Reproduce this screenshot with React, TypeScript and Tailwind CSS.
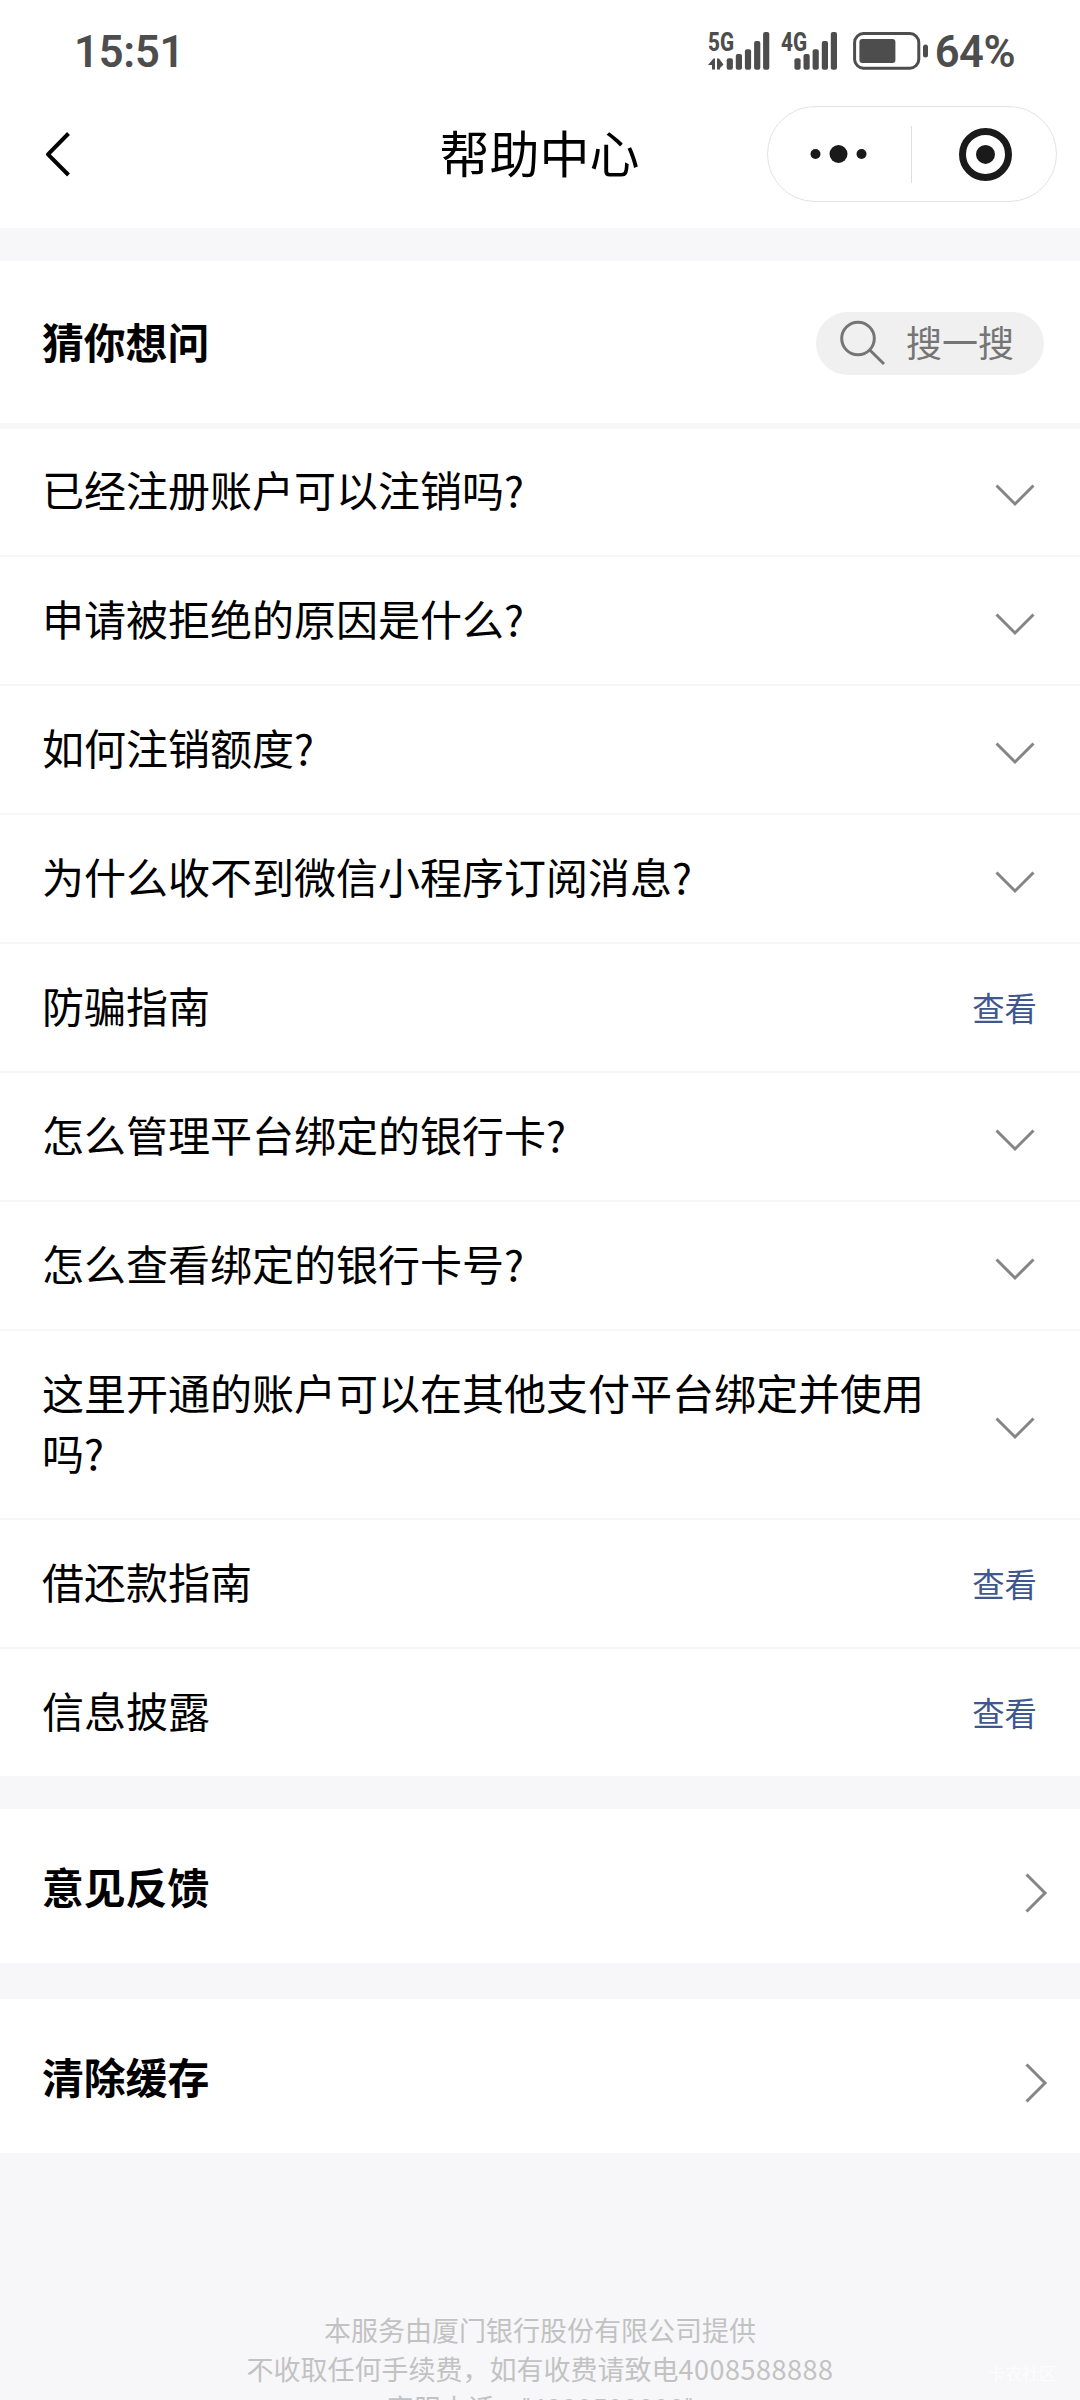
import React from "react";

type Question = {
    title: string;
    action: "expand" | "view";
};

const questions: Question[] = [
    { title: "已经注册账户可以注销吗?", action: "expand" },
    { title: "申请被拒绝的原因是什么?", action: "expand" },
    { title: "如何注销额度?", action: "expand" },
    { title: "为什么收不到微信小程序订阅消息?", action: "expand" },
    { title: "防骗指南", action: "view" },
    { title: "怎么管理平台绑定的银行卡?", action: "expand" },
    { title: "怎么查看绑定的银行卡号?", action: "expand" },
    { title: "这里开通的账户可以在其他支付平台绑定并使用吗?", action: "expand" },
    { title: "借还款指南", action: "view" },
    { title: "信息披露", action: "view" },
];

const links = ["意见反馈", "清除缓存"];

// left edge offset and top of each signal bar, shortest first
const bars = [
    [0, 26.3],
    [9.1, 22],
    [18.2, 17.3],
    [27.4, 9],
    [36.4, 0],
];

function Signal({ label, barsX, arrows }: { label: string; barsX: number; arrows?: boolean }) {
    return (
        <svg width="62" height="38" viewBox="0 0 62 38" fill="#4d4d4d" className="overflow-visible">
            <text
                x="0"
                y="18.6"
                fontSize="26"
                fontWeight="800"
                textLength="26"
                lengthAdjust="spacingAndGlyphs"
                className="font-['Roboto',sans-serif]"
            >
                {label}
            </text>
            {arrows && <path d="M0 33 L5.5 26.5 H7 V37.5 H4 V33 Z M9 26.5 H11 L15.5 32.5 L12 36 V37.5 H9 Z" />}
            {bars.map(([x, y]) => (
                <rect key={x} x={barsX + x} y={y} width="6.2" height={37.7 - y} rx="2" />
            ))}
        </svg>
    );
}

function StatusBar() {
    return (
        <div className="flex h-[102px] items-center justify-between pl-[74px] pr-[65px] font-['Roboto','Noto_Sans_CJK_SC',sans-serif] text-[43.5px] font-semibold leading-none text-[#4d4d4d]">
            <span className="mt-[3px] tracking-[-0.2px]">15:51</span>
            <div className="flex items-center">
                <Signal label="5G" barsX={18.7} arrows />
                <span className="w-[11px]" />
                <Signal label="4G" barsX={13.4} />
                <span className="w-[10px]" />
                <svg width="76" height="38" viewBox="0 0 76 38" fill="#4d4d4d">
                    <rect x="1.6" y="1.6" width="64.2" height="34.6" rx="9" fill="none" stroke="#4d4d4d" strokeWidth="3" />
                    <rect x="6.4" y="6.9" width="36" height="24" rx="3" />
                    <rect x="70" y="12.4" width="5" height="13" rx="2.5" />
                </svg>
                <span className="ml-[6px] mt-[3px] tracking-[-0.5px]">64%</span>
            </div>
        </div>
    );
}

function NavBar() {
    return (
        <div className="grid h-[126px] grid-cols-[1fr_auto_1fr] items-start pl-[22px] pr-[23px]">
            <svg width="30" height="48" viewBox="0 0 30 48" className="ml-[22px] mt-[28px]" fill="none" stroke="#000" strokeWidth="4" strokeLinejoin="round">
                <path d="M24.5 3.5 L4 24.3 L24.5 45" />
            </svg>
            <h1 className="mt-[15px] text-[50px] leading-[68px]">帮助中心</h1>
            <div className="mt-[4px] flex h-[96px] w-[290px] items-center justify-self-end rounded-full border border-[#e3e3e3]">
                <svg width="143" height="60" viewBox="0 0 143 60" fill="#1a1a1a">
                    <circle cx="47.5" cy="30" r="5" />
                    <circle cx="70.5" cy="30" r="9" />
                    <circle cx="93.5" cy="30" r="5" />
                </svg>
                <div className="h-[57px] w-px bg-[#dedede]" />
                <svg width="143" height="60" viewBox="0 0 143 60" fill="#1a1a1a">
                    <circle cx="73.5" cy="30.4" r="23" fill="none" stroke="#1a1a1a" strokeWidth="7" />
                    <circle cx="73.5" cy="30.4" r="9.5" />
                </svg>
            </div>
        </div>
    );
}

function ChevronDown() {
    return (
        <svg width="40" height="24" viewBox="0 0 40 24" className="shrink-0" fill="none" stroke="#858585" strokeWidth="3">
            <path d="M1.5 1.5 L20 20 L38.5 1.5" />
        </svg>
    );
}

function ChevronRight() {
    return (
        <svg width="24" height="40" viewBox="0 0 24 40" className="mt-[13px]" fill="none" stroke="#858585" strokeWidth="3">
            <path d="M2.5 1.5 L21 20 L2.5 38.5" />
        </svg>
    );
}

const App = () => {
    return (
        <div className="relative flex h-[2400px] w-[1080px] flex-col overflow-hidden bg-[#f7f7fa] font-['Noto_Sans_CJK_SC',sans-serif] text-black">
            <header className="h-[228px] shrink-0 bg-white">
                <StatusBar />
                <NavBar />
            </header>

            <main className="mt-[33px]">
                <section className="bg-white">
                    <div className="flex h-[168px] items-center justify-between border-b-6 border-[#f8f8f8] pl-[42px] pr-[36px]">
                        <h2 className="mb-[2px] text-[41.8px] font-bold leading-[60px]">猜你想问</h2>
                        <div className="mt-[2px] flex h-[63px] w-[228px] items-center rounded-full bg-[#f0f0f0] pl-[23px] text-[#757575]">
                            <svg width="48" height="48" viewBox="0 0 48 48" fill="none" stroke="currentColor" strokeWidth="3">
                                <circle cx="19" cy="19.5" r="16.3" />
                                <path d="M30.8 31 L45 45" />
                            </svg>
                            <span className="mb-[4px] ml-[19px] text-[36px] leading-none">搜一搜</span>
                        </div>
                    </div>

                    <ul>
                        {questions.map((q) => (
                            <li
                                key={q.title}
                                className="flex items-center justify-between border-b-2 border-[#f6f6f8] pb-[36px] pl-[42px] pr-[43px] pt-[31px] first:pt-[30px] last:border-b-0"
                            >
                                <p className="max-w-[890px] text-[42px] leading-[60px]">{q.title}</p>
                                {q.action === "view" ? (
                                    <a className="mt-[4px] text-[32.4px] leading-[48px] text-[#3f578c]">查看</a>
                                ) : (
                                    <span className="mr-[2px] flex pt-[14px]">
                                        <ChevronDown />
                                    </span>
                                )}
                            </li>
                        ))}
                    </ul>
                </section>

                {links.map((title) => (
                    <section key={title} className="mt-[33px] flex h-[154px] items-center justify-between bg-white pl-[42px] pr-[32px] last:mt-[36px]">
                        <h2 className="mb-px text-[41.8px] font-bold leading-[60px]">{title}</h2>
                        <ChevronRight />
                    </section>
                ))}
            </main>

            <footer className="mt-[157px] text-center text-[27px] leading-[39px] text-[#c2c2c2]">
                <p>本服务由厦门银行股份有限公司提供</p>
                <p>
                    不收取任何手续费，如有收费请致电<span className="tracking-[0.5px]">4008588888</span>
                </p>
                <p>
                    客服电话：<span className="font-['Roboto',sans-serif] tracking-[0.2px]">"4008588888"</span>
                </p>
            </footer>

            <span className="absolute bottom-[19px] right-[24px] text-[17px] leading-none text-white/70">卡农社区</span>
        </div>
    );
};

export default App;
